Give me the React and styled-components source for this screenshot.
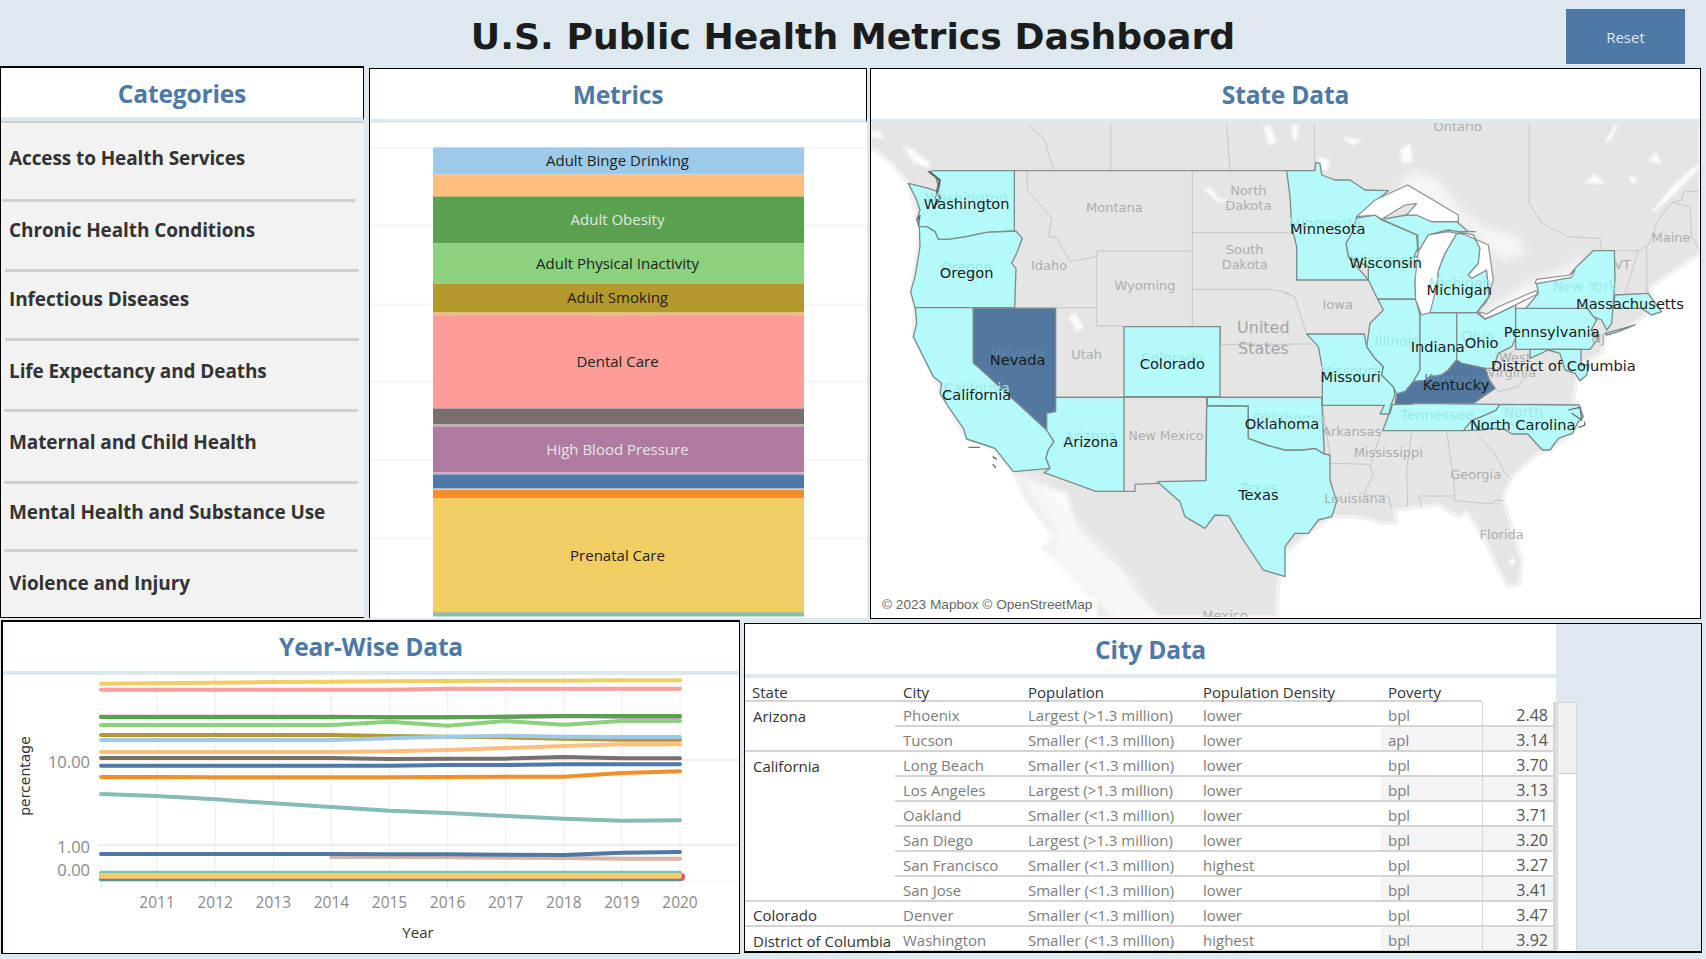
import React from "react";
import styled, { createGlobalStyle } from "styled-components";

const Global = createGlobalStyle`
  html, body { margin: 0; padding: 0; background: #dde9ef; }
  body { width: 1706px; height: 959px; overflow: hidden; font-family: "Open Sans", "Noto Sans", sans-serif; }
`;

const Page = styled.div`
  width: 1706px;
  height: 959px;
  background: #dde9ef;
  display: flex;
  flex-direction: column;
`;
const Header = styled.header`
  height: 66px;
  display: grid;
  grid-template-columns: 1fr auto 1fr;
  align-items: start;
`;
const Title = styled.h1`
  grid-column: 2;
  margin: 15px 0 0;
  font: bold 36.2px/44px "DejaVu Sans", sans-serif;
  color: #1c1c1c;
  white-space: nowrap;
`;
const Reset = styled.button`
  grid-column: 3;
  justify-self: end;
  width: 119px;
  height: 55px;
  margin: 9px 21px 0 0;
  background: #4e79a7;
  border: 0;
  color: #dfe8f0;
  font: 15px "Open Sans", sans-serif;
`;
const TopRow = styled.div`
  height: 552px;
  display: flex;
`;
const BottomRow = styled.div`
  display: flex;
  align-items: flex-start;
`;
const Panel = styled.section`
  box-sizing: border-box;
  display: flex;
  flex-direction: ${(p) => (p.$row ? "row" : "column")};
  background: ${(p) => p.$bg || "#fff"};
  width: ${(p) => p.$w}px;
  height: ${(p) => p.$h}px;
  margin: ${(p) => p.$m || "0"};
  border-left: ${(p) => p.$left || 1}px solid #000;
  border-top: ${(p) => p.$top || 1}px solid #000;
  border-right: ${(p) => (p.$right ? "1px solid #000" : "0")};
  border-bottom: ${(p) => (p.$bottom ? `${p.$bottom}px solid #000` : "0")};
  overflow: hidden;
  flex: none;
`;
const PanelTitle = styled.h2`
  box-sizing: border-box;
  flex: none;
  margin: 0;
  height: ${(p) => p.$h || 51}px;
  padding-top: ${(p) => p.$pt || 0}px;
  background: #fff;
  display: flex;
  align-items: center;
  justify-content: center;
  font: 700 24.6px "Open Sans", "Noto Sans", sans-serif;
  letter-spacing: -0.2px;
  color: #4e79a7;
  border-right: ${(p) => (p.$rule ? "1px solid #000" : "0")};
  border-bottom: 4px solid #dde9ef;
`;
const List = styled.div`
  flex: 1;
  background: #f2f2f2;
  display: flex;
  flex-direction: column;
  border-top: 2px solid #cfcfcf;
`;
const Item = styled.div`
  box-sizing: border-box;
  height: ${(p) => p.$h}px;
  display: flex;
  align-items: center;
  padding: 0 0 ${(p) => p.$pb}px 8px;
  font: 700 19px "Open Sans", "Noto Sans", sans-serif;
  letter-spacing: -0.1px;
  color: #333;
`;
const Divider = styled.div`
  height: 3px;
  background: #d0d0d0;
  margin: 0 ${(p) => p.$r}px 0 ${(p) => p.$l}px;
`;
const Figure = styled.svg`
  display: block;
  flex: 1;
  min-height: 0;
`;
const BarLabel = styled.text`
  font: 15px "Open Sans", sans-serif;
  fill: ${(p) => (p.$light ? "#e6e6e6" : "#222")};
  text-anchor: middle;
  dominant-baseline: central;
`;
const MapWrap = styled.div`
  position: relative;
  flex: 1;
  min-height: 0;
  overflow: hidden;
  background: #fff;
`;
const MapSvg = styled.svg`
  display: block;
`;
const Credit = styled.div`
  position: absolute;
  left: 6px;
  bottom: 4px;
  padding: 0 5px;
  height: 19px;
  background: rgba(255, 255, 255, 0.65);
  font: 13.65px/19px "Liberation Sans", sans-serif;
  color: #666;
`;
const MapLabel = styled.text`
  text-anchor: middle;
  dominant-baseline: central;
  font-family: "DejaVu Sans", sans-serif;
  font-size: ${(p) => p.$s}px;
  fill: ${(p) => p.$c};
`;
const ChartTick = styled.text`
  font: ${(p) => p.$s || 15.5}px "Open Sans", sans-serif;
  fill: #8a8a8a;
  text-anchor: ${(p) => p.$a || "middle"};
  dominant-baseline: central;
`;
const AxisTitle = styled.text`
  font: ${(p) => (p.$dv ? '14px "DejaVu Sans"' : '15px "Open Sans"')}, sans-serif;
  fill: #333;
  text-anchor: middle;
  dominant-baseline: central;
`;
const CityMain = styled.div`
  width: 811px;
  flex: none;
  display: flex;
  flex-direction: column;
  overflow: hidden;
  background: #fff;
  height: 100%;
`;
const CitySide = styled.div`
  flex: 1;
  background: #dde9ef;
  padding: 78px 0 0 1px;
`;
const ScrollTrack = styled.div`
  box-sizing: border-box;
  width: 20px;
  height: 249px;
  background: #fff;
  border: 1px solid #d4d4d4;
  border-bottom: 0;
`;
const ScrollThumb = styled.div`
  height: 70px;
  background: #f0f0f0;
  border-bottom: 1px solid #cfcfcf;
`;
const CityRow = styled.div`
  box-sizing: border-box;
  display: grid;
  grid-template-columns: 150px 125px 175px 186px 101px 74px;
  grid-template-rows: ${(p) => p.$h || 25}px;
  height: ${(p) => p.$h || 25}px;
  font: 15px/18px "Open Sans", sans-serif;
  flex: none;
`;
const HeadCell = styled.div`
  padding: 5px 0 0 ${(p) => p.$p}px;
  color: #333;
  display: flex;
  align-items: center;
  border-bottom: ${(p) => (p.$none ? "0" : "2px solid #d4d4d4")};
  box-sizing: border-box;
`;
const StateCell = styled.div`
  box-sizing: border-box;
  padding: 2px 0 0 8px;
  color: #333;
  white-space: nowrap;
  display: flex;
  align-items: center;
  border-bottom: ${(p) => (p.$line ? "2px solid #d4d4d4" : "0")};
`;
const Cell = styled.div`
  box-sizing: border-box;
  padding: 2px 0 0 ${(p) => p.$p}px;
  color: #7d7d7d;
  display: flex;
  align-items: center;
  white-space: nowrap;
  border-bottom: 2px solid #d4d4d4;
  background: ${(p) => (p.$shade ? "#f4f4f4" : "#fff")};
`;
const NumCell = styled.div`
  box-sizing: border-box;
  display: flex;
  align-items: center;
  justify-content: flex-end;
  padding: 3px 5px 0 0;
  color: #555;
  font-size: 16px;
  border-left: 1px solid #d4d4d4;
  border-right: 3px solid #d6d6d6;
  border-bottom: 2px solid #d4d4d4;
  background: ${(p) => (p.$shade ? "#f4f4f4" : "#fff")};
`;

/* ---------- metric stack ---------- */
const segments = [
  [147, 174, "#9ecae9", "Adult Binge Drinking"],
  [174, 196, "#ffbe7d"],
  [196, 243, "#59a14f", "Adult Obesity", true],
  [243, 283, "#8cd17d", "Adult Physical Inactivity"],
  [283, 312, "#b6992d", "Adult Smoking"],
  [312, 314, "#d9c46a"],
  [314, 408, "#ff9d9a", "Dental Care"],
  [408, 424, "#79706e"],
  [424, 426, "#bab0ac"],
  [426, 472, "#b07aa1", "High Blood Pressure", true],
  [472, 474, "#d4a6c8"],
  [474, 488, "#4e79a7"],
  [489, 498, "#f28e2b"],
  [498, 612, "#f1ce63", "Prenatal Care"],
  [612, 613, "#499894"],
  [613, 616, "#86bcb6"],
];

function MetricChart() {
  return (
    <Figure viewBox="370 123 496 494" width="496" height="494">
      {[147, 225, 304, 381, 460, 538].map((y) => (
        <rect key={y} x="370" y={y - 1} width="496" height="2" fill="#f4f4f4" />
      ))}
      {segments.map(([a, b, c]) => (
        <rect key={a} x="433" y={a} width="371" height={b - a} fill={c} />
      ))}
      {segments.filter((s) => s[3]).map(([a, b, , t, l]) => (
        <BarLabel key={t} x="617.5" y={(a + b) / 2 - 1} $light={l}>{t}</BarLabel>
      ))}
    </Figure>
  );
}

/* ---------- map ---------- */
const q = (n, s) =>
  s.trim().split(/\s+/).map((p) => {
    const [x, y] = p.split(",").map(Number);
    return `${x + (n === 2 || n === 4 ? 1245 : 0)},${y + (n >= 3 ? 750 : 0)}`;
  }).join(" ");

const land = [
  q(1, "0,0"), q(2, "1245,0 1245,400 1170,450 1100,500 1100,570 1050,610 960,650 950,700 890,730"),
  q(4, "880,0 865,90 890,110 880,155 860,190 800,240 760,250 680,320 655,380 665,420 710,570 705,640 670,650 640,600 600,510 545,425 520,440 460,405 330,420 335,460 300,460 215,440 140,440 70,490 0,550"),
  q(3, "1225,640 1220,741 870,741 800,680 750,600 700,560 620,480 590,370 520,350 540,430 600,520 660,600 690,680 730,741 690,741 640,640 560,560 520,535 555,500 470,390 430,305 375,235 290,207 235,110 190,20"),
  q(1, "130,650 135,565 125,510 150,330 115,190 60,125 0,80"),
].join(" ");

const states = [
  [q(1, "195,152 433,152 433,333 350,337 290,350 235,358 205,358 195,335 170,320 148,320 140,300 150,270 140,240 115,190 175,205 205,215 210,190 195,170 175,155")],
  [q(1, "148,320 170,320 195,335 205,358 235,358 290,350 350,337 437,333 457,355 440,400 425,430 438,445 434,563 135,563 122,515 135,470 150,380")],
  [q(1, "136,563 310,563 310,728") + " " + q(3, "335,0 530,180 552,215 535,240 528,265 540,295 430,305 375,235 345,225 290,207 280,175 235,110 210,70 215,40 190,20") + " " + q(1, "165,720 130,650 140,610")],
  [q(1, "310,565 557,565") + " " + q(3, "557,125 530,130 530,180 335,0") + " " + q(1, "310,728"), true],
  [q(3, "557,82 762,82 762,364 678,364 522,308 540,295 528,265 535,240 552,215 530,180 530,130 557,125")],
  [q(1, "762,620 1050,620") + " " + q(3, "1050,80 762,80")],
  [q(3, "1010,108 1135,108 1135,205 1190,225") + " " + q(4, "0,240 50,240 90,235 118,252 135,255 135,330 155,395 140,440 100,450 70,490 30,490 0,530") + " " + q(3, "1245,620 1180,600 1120,510 1075,437 1035,435 1005,475 945,440 930,395 862,335 1008,332")],
  [q(3, "1012,82") + " " + q(4, "110,82 118,252 90,235 50,240 0,240") + " " + q(3, "1190,225 1135,205 1135,108 1012,106")],
  [q(2, "65,642 238,642 245,680 270,715 295,740") + " " + q(4, "290,15 325,50 330,75 318,105 312,132 285,132 298,106 112,106") + " " + q(2, "112,745 100,680")],
  [q(2, "278,537 392,537 405,585 405,750") + " " + q(4, "385,35 360,65 335,72 325,50 290,15") + " " + q(2, "295,740 270,715 245,680 255,610 295,570")],
  [q(2, "405,578 515,578 515,720") + " " + q(4, "490,0 470,15 440,20 420,32 385,35") + " " + q(2, "405,750")],
  [q(2, "515,578 575,578 600,598 640,580 692,555 692,655 680,680 640,700 625,745 600,745 530,730 515,720")],
  [q(2, "515,720 530,730 600,745") + " " + q(4, "605,5 612,30 630,55 565,100 385,100 380,106 330,106 335,72 360,65 385,35 420,32 440,20 470,15 490,0"), true],
  [q(4, "322,104 383,102 385,100 645,103 632,122 590,140 560,152 535,182 293,182 312,132 315,130")],
  [q(4, "645,103 882,105 895,140 880,155 862,190 820,205 795,240 772,240 728,192 680,192 660,178 620,175 590,180 535,182 560,152 590,140 632,122")],
  [q(2, "692,565 722,565 908,565 935,600 918,630 940,655 915,688 692,688")],
  [q(2, "722,565 760,520 755,490 850,470 870,445 925,392 988,392 990,480 980,610 965,630 950,600 925,590 908,565")],
  [q(2, "960,640 1050,615 1000,635 965,645")],
  [q(2, "990,525 1090,520 1100,535 1130,575 1100,585 1070,565 985,565")],
  [q(2, "735,688 888,688 888,735 912,735") + " " + q(4, "905,15 885,32 870,10 840,0") + " " + q(2, "825,700 790,690 735,715")],
  [q(2, "210,295 270,285 290,300 395,345 398,385 385,415 410,400 390,480 392,537 278,537 250,480 250,440 190,410 183,370 205,330")],
  [q(2, "5,152 90,152 92,128 105,130 110,165 150,180 195,180 240,210 310,212 215,290 205,330 183,370 190,410 250,480 35,480 35,380 20,320 15,230")],
  [q(2, "290,298 365,285 395,285 440,305 515,305 550,335 570,335 520,335 490,330 430,345 400,395 398,345")],
  [q(2, "515,340 565,345 585,385 580,430 550,465 560,475 605,450 612,530 575,578 430,578 455,500 460,450 480,400")],
];

const lakes = [
  q(2, "215,290 270,240 368,195 520,285 520,305 440,305 395,285 365,285 395,250 360,255 290,298 270,285"),
  q(2, "490,335 430,345 400,395 390,480 392,540 410,585 435,578 455,500 460,450 480,400 515,340"),
  q(2, "520,335 610,375 625,480 605,545 575,578 612,530 605,450 560,475 550,465 580,430 585,385 565,345"),
  q(2, "578,575 600,596 640,580 758,522 752,512 640,560 605,582"),
  q(2, "750,490 755,478 855,465 870,450 860,472 760,490"),
];

const waterSpots = [
  q(2, "20,15 42,15 35,65 22,55"), q(2, "345,90 375,70 385,125 350,130"), q(2, "100,110 135,120 125,155 105,145"),
  q(2, "170,50 230,60 205,78 185,65"), q(2, "900,190 930,160 958,192"), q(2, "1090,125 1110,95 1130,128"),
  q(2, "1030,172 1050,168 1055,185 1040,188"), q(2, "1100,275 1170,190 1240,130 1238,150 1170,220 1110,275"),
  q(2, "960,65 990,15 1000,15 975,65"), q(1, "1180,20 1200,15 1220,65 1195,78"), q(1, "596,590 615,580 642,620 620,638"),
  q(1, "100,80 125,85 180,130 175,145 130,125"), q(1, "0,30 30,35 40,55 10,55"), q(1, "1000,205 1025,205 1045,235 1080,240 1050,248 1020,225"),
  q(4, "670,570 690,565 688,585 675,585"),
];

const borders = [
  "1,475,12 525,60 550,150", "1,722,12 722,152", "1,1070,12 1080,152", "1,472,152 472,210 545,295 535,350 560,352 600,425 680,410",
  "1,680,393 967,393", "1,967,152 967,618", "1,967,337 1260,337", "1,967,508 1200,508 1260,520", "1,680,393 680,618 760,618",
  "1,435,563 680,563", "1,1050,673 1260,673",
  "2,88,12 88,152", "2,0,520 30,530 35,550 65,642", "2,0,672 80,672",
  "2,733,12 733,250 770,310 850,350 945,355 950,390", "2,1090,375 1120,300 1160,248 1215,260 1220,350 1240,385", "2,1160,248 1190,240 1195,215 1240,215",
  "2,1020,520 1060,392", "2,1085,380 1085,520", "2,1060,392 1090,375", "2,985,392 1060,392",
  "4,135,280 255,283", "4,290,182 255,290 265,315 235,375", "4,235,375 310,378 320,415", "4,380,185 365,300 368,410",
  "4,485,185 505,320 510,390", "4,400,378 510,378", "4,400,378 410,410", "4,510,392 625,402 630,390 655,392",
  "4,575,195 630,250 660,310 678,328", "4,610,20 640,65 700,50 720,20", "4,112,106 135,255",
  "2,692,655 692,688", "2,645,720 690,690",
];
const strongBorders = [
  "1,433,152 1250,152", "2,5,152 90,152",
  "3,1010,82 1010,108 1008,332 862,340 795,343 795,364 762,364", "1,1050,618 1050,673",
  "3,762,82 1050,82", "3,557,82 762,82", "3,1050,82 1250,82", "4,0,82 110,82",
];
const toPts = (s) => {
  const [n, ...rest] = s.split(",");
  return q(Number(n), rest.join(","));
};

const BLK = "#1a1a1a";
const GRY = "#adadad";
const FNT = "#9fe7e7";
const labels = [
  ["Washington", 290, 233, 14, FNT], ["Oregon", 290, 440, 14, FNT], ["Minnesota", 1365, 310, 14, FNT], ["Wisconsin", 1545, 420, 14, FNT],
  ["Michigan", 1770, 490, 14, FNT], ["Illinois", 1580, 663, 14, FNT], ["Ohio", 1823, 648, 14, FNT], ["New York", 2145, 497, 14, FNT],
  ["Nevada", 443, 700, 14, "#5f86ad"], ["Colorado", 907, 715, 14, FNT], ["California", 320, 55, 14, FNT, 3], ["Arizona", 662, 197, 14, FNT, 3],
  ["Oklahoma", 1255, 145, 14, FNT, 3], ["Texas", 1165, 355, 14, FNT, 3], ["Missouri", 190, 2, 14, FNT, 4], ["Kentucky", 513, 28, 14, "#5f86ad", 4],
  ["Tennessee", 457, 135, 14, FNT, 4], ["North", 715, 125, 14, FNT, 4],
  ["Montana", 733, 263, 13, GRY], ["North", 1135, 211, 13, GRY], ["Dakota", 1135, 257, 13, GRY], ["South", 1124, 388, 13, GRY], ["Dakota", 1124, 434, 13, GRY],
  ["Idaho", 537, 435, 13, GRY], ["Wyoming", 825, 497, 13, GRY], ["Utah", 650, 702, 13, GRY], ["United", 1180, 622, 16, "#a3a3a3"], ["States", 1180, 685, 16, "#a3a3a3"],
  ["Ontario", 1763, 18, 13, GRY], ["Maine", 2403, 353, 13, GRY], ["VT", 2257, 432, 13, GRY], ["NJ", 2185, 655, 13, GRY], ["West", 1935, 712, 13, GRY],
  ["Iowa", 1403, 554, 13, GRY],
  ["New Mexico", 888, 197, 12.5, GRY, 3], ["Arkansas", 200, 185, 13, GRY, 4], ["Mississippi", 310, 248, 13, GRY, 4], ["Georgia", 572, 313, 13, GRY, 4],
  ["Louisiana", 210, 385, 13, GRY, 4], ["Florida", 650, 492, 13, GRY, 4], ["Virginia", 680, 8, 13, GRY, 4], ["Mexico", 1065, 735, 13, GRY, 3],
  ["Washington", 290, 250, 14.6, BLK], ["Oregon", 290, 457, 14.6, BLK], ["Nevada", 443, 717, 14.6, BLK], ["Colorado", 907, 730, 14.6, BLK],
  ["Minnesota", 1373, 325, 14.6, BLK], ["Wisconsin", 1547, 427, 14.6, BLK], ["Michigan", 1768, 507, 14.6, BLK], ["Massachusetts", 2280, 549, 14.6, BLK],
  ["Pennsylvania", 2045, 633, 14.6, BLK], ["Indiana", 1703, 680, 14.6, BLK], ["Ohio", 1835, 667, 14.6, BLK], ["District of Columbia", 2080, 737, 14.6, BLK],
  ["California", 320, 72, 14.6, BLK, 3], ["Arizona", 662, 213, 14.6, BLK, 3], ["Texas", 1165, 372, 14.6, BLK, 3], ["Oklahoma", 1236, 159, 14.6, BLK, 3],
  ["Missouri", 197, 20, 14.6, BLK, 4], ["Kentucky", 513, 42, 14.6, BLK, 4], ["North Carolina", 713, 162, 14.6, BLK, 4],
];

function UsMap() {
  return (
    <MapSvg viewBox="3 9 2490 1482" width="830" height="494">
      <defs>
        <filter id="soft" x="-20%" y="-20%" width="140%" height="140%">
          <feGaussianBlur stdDeviation="14" />
        </filter>
        <filter id="spot" x="-20%" y="-20%" width="140%" height="140%">
          <feGaussianBlur stdDeviation="3" />
        </filter>
      </defs>
      <polygon points={land} fill="#e5e5e5" stroke="#f1f1f1" strokeWidth="12" strokeLinejoin="round" />
      <polygon filter="url(#soft)" fill="#f6f6f6" points={q(2, "335,200 380,155 450,170 530,270 600,325 690,345 725,400 650,420 560,330 420,230")} />
      <polygon filter="url(#soft)" fill="#f6f6f6" points={q(2, "720,490 850,440 890,400 900,470 770,560 600,610 600,570")} />
      <polygon filter="url(#soft)" fill="#f6f6f6" points={q(3, "430,305 520,340 640,480 760,600 860,741 720,741 520,535 555,500")} />
      <g filter="url(#spot)">
        {waterSpots.map((p, i) => <polygon key={i} points={p} fill="#fbfbfb" />)}
      </g>
      {borders.map((b, i) => <polyline key={i} points={toPts(b)} fill="none" stroke="#c6c6c6" strokeWidth="3" />)}
      {strongBorders.map((b, i) => <polyline key={i} points={toPts(b)} fill="none" stroke="#8f8f8f" strokeWidth="4" />)}
      {states.map(([p, dark], i) => (
        <polygon key={i} points={p} fill={dark ? "#52789f" : "#b4fafa"} stroke="#7f8a8a" strokeWidth="4" strokeLinejoin="round" />
      ))}
      {lakes.map((p, i) => (
        <polygon key={i} points={p} fill="#fff" stroke="#8a8f8f" strokeWidth="3.5" strokeLinejoin="round" />
      ))}
      <polyline points={q(1, "178,155 210,180 200,215 212,235 188,265")} fill="none" stroke="#555" strokeWidth="5" />
      <polyline points={q(1, "195,165 205,200 195,240")} fill="none" stroke="#777" strokeWidth="3" />
      <polyline points={q(1, "142,300 150,285 145,318")} fill="none" stroke="#666" strokeWidth="4" />
      <polyline points={q(3, "295,232 330,232")} fill="none" stroke="#666" strokeWidth="3.5" />
      <polyline points={q(3, "368,260 380,268")} fill="none" stroke="#666" strokeWidth="4" />
      <polyline points={q(3, "368,283 378,293")} fill="none" stroke="#666" strokeWidth="4" />
      <polyline points={q(4, "850,120 885,112 890,150 860,130")} fill="none" stroke="#666" strokeWidth="3.5" />
      <polyline points={q(4, "880,172 900,165 898,155")} fill="none" stroke="#666" strokeWidth="3.5" />
      {labels.map(([t, x, y, s, c, n], i) => {
        const dy = n >= 3 ? 750 : 0;
        const dx = n === 4 ? 1245 : 0;
        return <MapLabel key={i} x={x + dx} y={y + dy} $s={s * 3} $c={c}>{t}</MapLabel>;
      })}
    </MapSvg>
  );
}

/* ---------- yearly lines ---------- */
const yr = (i) => (i === 0 ? 100 : 98 + i * 58.1);
const vy = (v) => 620 + v / 3;
const flat = (v) => Array(11).fill(v);
const series = [
  ["#499894", flat(778)],
  ["#86bcb6", flat(758)],
  ["#ffbe7d", flat(770)],
  ["#f1ce63", flat(765)],
  ["#d7b5a6", [null, null, null, null, 711, 711, 712, 713, 714, 716, 716]],
  ["#4e79a7", [702, 702, 702, 702, 702, 703, 703, 704, 705, 698, 696]],
  ["#86bcb6", [522, 528, 538, 550, 561, 572, 579, 588, 596, 602, 601]],
  ["#f28e2b", [471, 471, 472, 472, 472, 472, 471, 470, 470, 459, 454]],
  ["#4e79a7", [437, 437, 437, 437, 437, 437, 435, 435, 433, 433, 433]],
  ["#79706e", [414, 414, 414, 414, 414, 417, 416, 416, 411, 415, 415]],
  ["#ffbe7d", [396, 396, 396, 396, 396, 394, 390, 384, 378, 373, 373]],
  ["#b6992d", [345, 345, 345, 345, 345, 348, 350, 352, 356, 359, 359]],
  ["#9ecae9", [360, 360, 360, 360, 360, 355, 350, 347, 350, 351, 351]],
  ["#8cd17d", [315, 315, 315, 315, 315, 305, 317, 303, 314, 303, 303]],
  ["#b07aa1", [290, 290, 290, 290, 290, 292, 292, 290, 288, 290, 290]],
  ["#59a14f", [291, 291, 291, 291, 291, 292, 292, 290, 288, 288, 288]],
  ["#ff9d9a", [209, 209, 209, 209, 209, 209, 206, 206, 206, 206, 206]],
  ["#f1ce63", [191, 190, 188, 186, 185, 184, 183, 182, 182, 181, 181]],
];

function YearChart() {
  return (
    <Figure viewBox="2 675 736 278" width="736" height="278">
      {[1, 2, 3, 4, 5, 6, 7, 8, 9, 10].map((i) => (
        <line key={i} x1={yr(i)} x2={yr(i)} y1="676" y2="881" stroke="#f1f1f1" strokeWidth="1.5" />
      ))}
      <line x1="97" x2="738" y1="760" y2="760" stroke="#f0f0f0" strokeWidth="2.5" />
      <line x1="97" x2="738" y1="845" y2="845" stroke="#f0f0f0" strokeWidth="2.5" />
      <line x1="92" x2="738" y1="881" y2="881" stroke="#f4f4f4" strokeWidth="1" />
      {[0, 1, 2, 3, 4, 5, 6, 7, 8, 9, 10].map((i) => (
        <line key={i} x1={yr(i)} x2={yr(i)} y1="881" y2="888" stroke="#e4e4e4" strokeWidth="1" />
      ))}
      <circle cx="680" cy="877" r="4" fill="#e15759" />
      {series.map(([c, vals], i) => (
        <polyline
          key={i}
          fill="none"
          stroke={c}
          strokeWidth="4"
          strokeLinecap="round"
          strokeLinejoin="round"
          points={vals.map((v, k) => (v == null ? null : `${yr(k)},${vy(v)}`)).filter(Boolean).join(" ")}
        />
      ))}
      <ChartTick x="89" y="761" $a="end" $s={16.5}>10.00</ChartTick>
      <ChartTick x="89" y="846" $a="end" $s={16.5}>1.00</ChartTick>
      <ChartTick x="89" y="869" $a="end" $s={16.5}>0.00</ChartTick>
      {[1, 2, 3, 4, 5, 6, 7, 8, 9, 10].map((i) => (
        <ChartTick key={i} x={yr(i)} y="902">{2010 + i}</ChartTick>
      ))}
      <AxisTitle x="417" y="932">Year</AxisTitle>
      <AxisTitle $dv x="24" y="776" transform="rotate(-90 24 776)">percentage</AxisTitle>
    </Figure>
  );
}

/* ---------- city table ---------- */
const L = "Largest (>1.3 million)";
const S = "Smaller (<1.3 million)";
const rows = [
  ["Arizona", "Phoenix", L, "lower", "bpl", "2.48", 0],
  ["", "Tucson", S, "lower", "apl", "3.14", 1, true],
  ["California", "Long Beach", S, "lower", "bpl", "3.70", 0],
  ["", "Los Angeles", L, "lower", "bpl", "3.13", 1],
  ["", "Oakland", S, "lower", "bpl", "3.71", 0],
  ["", "San Diego", L, "lower", "bpl", "3.20", 1],
  ["", "San Francisco", S, "highest", "bpl", "3.27", 0],
  ["", "San Jose", S, "lower", "bpl", "3.41", 1, true],
  ["Colorado", "Denver", S, "lower", "bpl", "3.47", 0, true],
  ["District of Columbia", "Washington", S, "highest", "bpl", "3.92", 1],
];

function CityTable() {
  return (
    <>
      <CityRow $h={24}>
        <HeadCell $p={7}>State</HeadCell>
        <HeadCell $p={8}>City</HeadCell>
        <HeadCell $p={8}>Population</HeadCell>
        <HeadCell $p={8}>Population Density</HeadCell>
        <HeadCell $p={7}>Poverty</HeadCell>
        <HeadCell $none />
      </CityRow>
      {rows.map(([st, city, pop, den, pov, num, shade, line]) => (
        <CityRow key={city}>
          <StateCell $line={line}>{st}</StateCell>
          <Cell $p={8}>{city}</Cell>
          <Cell $p={8}>{pop}</Cell>
          <Cell $p={8}>{den}</Cell>
          <Cell $p={7} $shade={shade}>{pov}</Cell>
          <NumCell $shade={shade}>{num}</NumCell>
        </CityRow>
      ))}
    </>
  );
}

const categories = [
  ["Access to Health Services", 76, 6, 1, 9],
  ["Chronic Health Conditions", 67, 12, 4, 5],
  ["Infectious Diseases", 66, 12, 4, 5],
  ["Life Expectancy and Deaths", 68, 8, 3, 6],
  ["Maternal and Child Health", 69, 10, 3, 6],
  ["Mental Health and Substance Use", 65, 10, 3, 6],
  ["Violence and Injury", 66, 4],
];

export default function App() {
  return (
    <Page>
      <Global />
      <Header>
        <Title>U.S. Public Health Metrics Dashboard</Title>
        <Reset>Reset</Reset>
      </Header>
      <TopRow>
        <Panel $w={364} $h={552} $top={2} $bottom={1} $left={1}>
          <PanelTitle $rule $h={53} $pt={2}>Categories</PanelTitle>
          <List>
            {categories.map(([t, h, pb, l, r]) => (
              <React.Fragment key={t}>
                <Item $h={h} $pb={pb}>{t}</Item>
                {l !== undefined && <Divider $l={l} $r={r} />}
              </React.Fragment>
            ))}
          </List>
        </Panel>
        <Panel $w={498} $h={550} $m="2px 0 0 5px">
          <PanelTitle $rule $h={54}>Metrics</PanelTitle>
          <MetricChart />
        </Panel>
        <Panel $w={831} $h={551} $m="2px 0 0 3px" $right $bottom={1}>
          <PanelTitle $h={54}>State Data</PanelTitle>
          <MapWrap>
            <UsMap />
            <Credit>© 2023 Mapbox © OpenStreetMap</Credit>
          </MapWrap>
        </Panel>
      </TopRow>
      <BottomRow>
        <Panel $w={739} $h={334} $m="2px 0 0 1px" $left={2} $top={2} $right $bottom={1}>
          <PanelTitle $h={53}>Year-Wise Data</PanelTitle>
          <YearChart />
        </Panel>
        <Panel $w={958} $h={330} $m="5px 0 0 4px" $bg="#dde9ef" $right $bottom={2} $row>
          <CityMain>
            <PanelTitle $h={54}>City Data</PanelTitle>
            <CityTable />
          </CityMain>
          <CitySide>
            <ScrollTrack><ScrollThumb /></ScrollTrack>
          </CitySide>
        </Panel>
      </BottomRow>
    </Page>
  );
}
